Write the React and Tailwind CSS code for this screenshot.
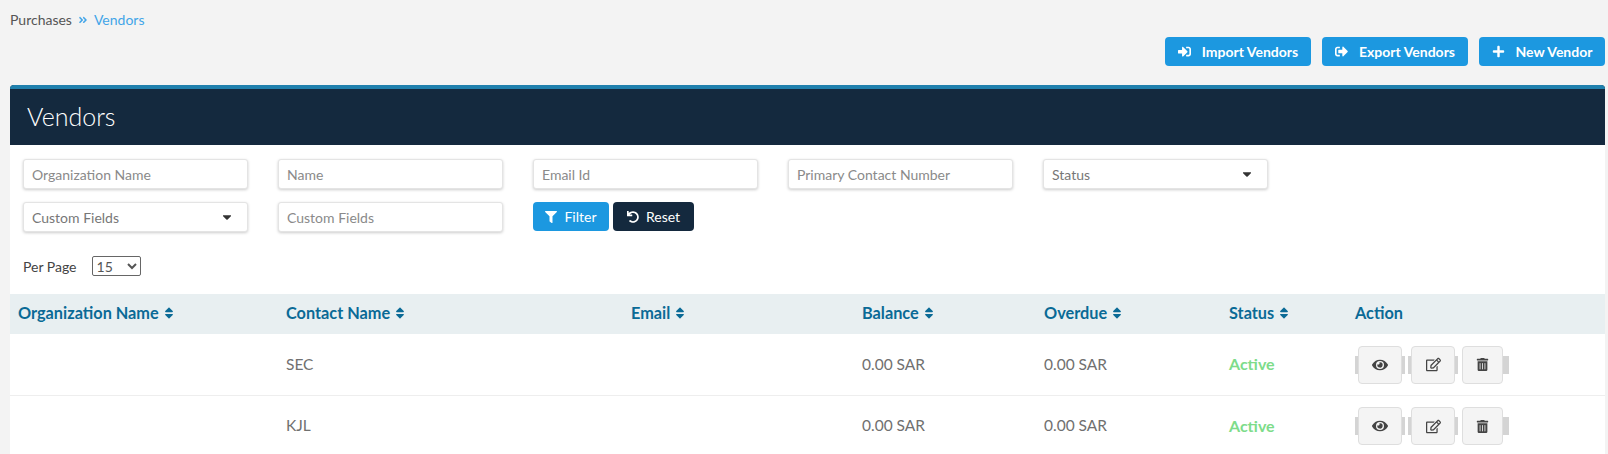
import { FaAngleDoubleRight, FaSignInAlt, FaSignOutAlt, FaPlus, FaFilter, FaUndo, FaSort, FaEye, FaRegEdit, FaTrashAlt, FaCaretDown } from "react-icons/fa";

const vendors = [
  { id: 1, contact: "SEC", balance: "0.00 SAR", overdue: "0.00 SAR", status: "Active" },
  { id: 2, contact: "KJL", balance: "0.00 SAR", overdue: "0.00 SAR", status: "Active" },
];

const columns = [
  { name: "Organization Name", width: "w-[268px]", sort: true },
  { name: "Contact Name", width: "w-[345px]", sort: true },
  { name: "Email", width: "w-[231px]", sort: true },
  { name: "Balance", width: "w-[182px]", sort: true },
  { name: "Overdue", width: "w-[185px]", sort: true },
  { name: "Status", width: "w-[126px]", sort: true },
  { name: "Action", width: "", sort: false },
];

const TopButton = ({ icon, label, width }) => (
  <button className={`h-[29px] ${width} flex items-center justify-center gap-[11px] rounded bg-[#1c98e0] text-[14px] font-bold text-white`}>
    {icon}
    {label}
  </button>
);

const TextInput = ({ placeholder }) => (
  <input
    placeholder={placeholder}
    className="h-[30px] w-[225px] rounded-[3px] border border-[#e4e4e4] bg-white px-[8px] text-[14px] shadow-[0_1px_3px_rgba(0,0,0,0.2)] placeholder:text-[#8a8a8a]"
  />
);

const SelectBox = ({ label }) => (
  <div className="flex h-[30px] w-[225px] items-center justify-between rounded-[3px] border border-[#e4e4e4] bg-white pl-[8px] pr-[13px] text-[14px] text-[#777] shadow-[0_1px_3px_rgba(0,0,0,0.2)]">
    {label}
    <FaCaretDown className="text-[14px] text-[#333]" />
  </div>
);

const ActionButton = ({ icon, width }) => (
  <button className={`relative h-[38px] ${width} flex items-center justify-center rounded-[4px] border border-[#dedede] bg-[#f4f4f4] text-[15px] text-[#444]`}>
    {icon}
  </button>
);

const Stub = () => <span className="h-[18px] w-[3px] bg-[#d4d4d4]" />;

export default function App() {
  return (
    <div className="h-[454px] overflow-hidden bg-[#f3f3f3] font-['Lato','Liberation_Sans',sans-serif]">
      <div className="flex items-center pl-[10px] pt-[13px] text-[14px] leading-[14px]">
        <span className="text-[#555]">Purchases</span>
        <FaAngleDoubleRight className="mx-[6px] text-[10px] text-[#42a5e8]" />
        <span className="text-[#42a5e8]">Vendors</span>
      </div>

      <div className="mt-[10px] flex justify-end gap-[11px] pr-[3px]">
        <TopButton icon={<FaSignInAlt className="text-[13px]" />} label="Import Vendors" width="w-[146px]" />
        <TopButton icon={<FaSignOutAlt className="text-[13px]" />} label="Export Vendors" width="w-[146px]" />
        <TopButton icon={<FaPlus className="text-[13px]" />} label="New Vendor" width="w-[126px]" />
      </div>

      <div className="ml-[10px] mr-[3px] mt-[19px] overflow-hidden rounded-t-[4px] bg-white">
        <div className="flex h-[60px] items-center border-t-4 border-[#1f80ad] bg-[#14293e] pl-[17px] text-[25px] font-light text-white">
          Vendors
        </div>

        <div className="px-[13px] pt-[14px]">
          <div className="grid grid-cols-[repeat(5,225px)] gap-x-[30px] gap-y-[13px]">
            <TextInput placeholder="Organization Name" />
            <TextInput placeholder="Name" />
            <TextInput placeholder="Email Id" />
            <TextInput placeholder="Primary Contact Number" />
            <SelectBox label="Status" />
            <SelectBox label="Custom Fields" />
            <TextInput placeholder="Custom Fields" />
            <div className="flex gap-[4px]">
              <button className="flex h-[29px] w-[76px] items-center justify-center gap-[7px] rounded bg-[#1c98e0] text-[14px] text-white">
                <FaFilter className="text-[12px]" />
                Filter
              </button>
              <button className="flex h-[29px] w-[81px] items-center justify-center gap-[7px] rounded bg-[#14293e] text-[14px] text-white">
                <FaUndo className="text-[12px]" />
                Reset
              </button>
            </div>
          </div>

          <div className="mt-[24px] flex h-[20px] items-center text-[14px] text-[#444]">
            Per Page
            <select defaultValue="15" className="ml-[15px] h-[20px] w-[49px] rounded-[2px] border border-[#666] bg-white text-[14px] text-[#555]">
              <option>15</option>
            </select>
          </div>
        </div>

        <table className="mt-[18px] w-full table-fixed border-collapse">
          <thead>
            <tr className="h-[40px] bg-[#e8eff1] text-left text-[16.3px] font-bold text-[#0a6a96]">
              {columns.map((col) => (
                <th key={col.name} className={`${col.width} pl-[8px] font-bold`}>
                  <span className="flex items-center gap-[3px] pb-[2px]">
                    {col.name}
                    {col.sort && <FaSort className="text-[14px]" />}
                  </span>
                </th>
              ))}
            </tr>
          </thead>
          <tbody>
            {vendors.map((v) => (
              <tr key={v.id} className="h-[61px] border-b border-[#eeeeee] text-[15.5px] text-[#707070]">
                <td className="pl-[8px]"></td>
                <td className="pl-[8px]">{v.contact}</td>
                <td className="pl-[8px]"></td>
                <td className="pl-[8px]">{v.balance}</td>
                <td className="pl-[8px]">{v.overdue}</td>
                <td className="pl-[8px] text-[16px] font-bold text-[#7ddc8a]">{v.status}</td>
                <td className="pl-[8px]">
                  <div className="mt-[1px] flex items-center">
                    <Stub />
                    <ActionButton icon={<FaEye className="text-[16px]" />} width="w-[44px]" />
                    <Stub />
                    <span className="w-[3px]" />
                    <Stub />
                    <ActionButton icon={<FaRegEdit className="text-[15px]" />} width="w-[44px]" />
                    <Stub />
                    <span className="w-[4px]" />
                    <ActionButton icon={<FaTrashAlt className="text-[13px]" />} width="w-[41px]" />
                    <span className="h-[18px] w-[6px] bg-[#d4d4d4]" />
                  </div>
                </td>
              </tr>
            ))}
          </tbody>
        </table>
      </div>
    </div>
  );
}
